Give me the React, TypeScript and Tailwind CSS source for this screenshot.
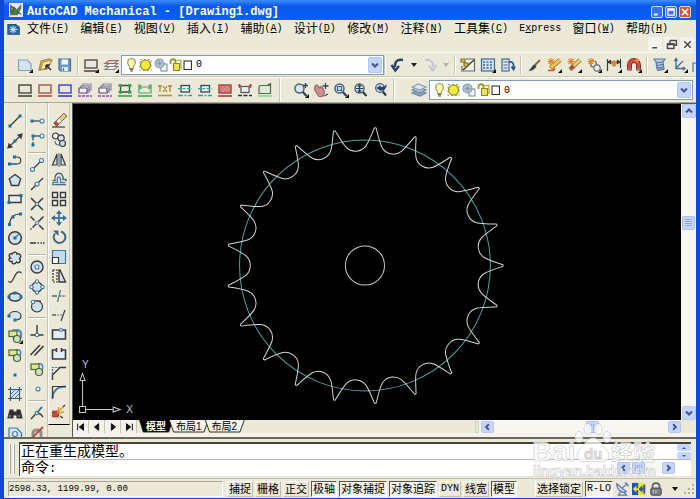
import type { ReactNode } from "react"
import clsx from "clsx"

const INK = "#3a3a3a"
const BLUE = "#3d7ba6"
const PALE = "#cfe0ee"

type Tool = {
  label: string
  art: ReactNode
  more?: boolean
}

type IconProps = {
  children: ReactNode
  className?: string
}

const Icon = ({ children, className = "size-4" }: IconProps) => (
  <svg
    viewBox="0 0 16 16"
    className={clsx("block shrink-0", className)}
    fill="none"
    stroke={INK}
    strokeWidth="1.2"
    aria-hidden="true"
  >
    {children}
  </svg>
)

const Node = ({ x, y }: { x: number; y: number }) => (
  <rect x={x - 1.5} y={y - 1.5} width="3" height="3" fill="#1f6f9c" stroke="none" />
)

const Ring = ({ x, y, r = 2 }: { x: number; y: number; r?: number }) => (
  <circle cx={x} cy={y} r={r} fill="#f4faff" stroke={BLUE} strokeWidth="1.1" />
)

const More = () => <path d="M16 12v4h-4z" fill="#111" stroke="none" />

const Box = ({ line, fill = "#e9e6dc" }: { line: string; fill?: string }) => (
  <>
    <rect x="2" y="3" width="12" height="8" fill={fill} stroke={line} strokeWidth="1.4" />
    <path d="M1 14h14" stroke={line} strokeWidth="1.6" />
  </>
)

const fileTools: Tool[] = [
  { label: "New", more: true, art: <path d="M1.5 3h9l3.5 4v6.500H1.500z" fill="#d4e4f4" stroke="#7f9fbe" /> },
  {
    label: "Open",
    art: (
      <>
        <path d="M4 4l8-2 2 1-4 9-8 1z" fill="#e9cf7b" stroke="#a98b3c" />
        <path d="M3 13l3-8 9-2-4 8z" fill="#f8e7a6" stroke="#a98b3c" />
        <path d="M9 8l5 5M9 8v4M9 8h4" stroke="#333" strokeWidth="1.5" />
      </>
    ),
  },
  {
    label: "Save",
    art: (
      <>
        <path d="M2 2h11.500v12H3.500L2 12.500z" fill="#6f9cc6" stroke="#436f9b" />
        <path d="M4.500 2.500h6.500v5H4.500z" fill="#eef5fb" stroke="none" />
        <path d="M5 10h6v4H5z" fill="#dde8f2" stroke="none" />
        <path d="M6.500 11v3" stroke="#436f9b" />
      </>
    ),
  },
]

const layerTools: Tool[] = [
  { label: "Layer", more: true, art: <Box line="#5b4a4a" /> },
  {
    label: "Layers",
    more: true,
    art: (
      <>
        <path d="M2 12.500l4-3h9l-4 3zM2 9.500l4-3h9l-4 3z" fill="#eee" stroke="#8c8282" />
        <path d="M2 6.500l4-3h9l-4 3z" fill="#f3c9c9" stroke="#a06a6a" />
      </>
    ),
  },
]

const paletteTools: Tool[] = [
  {
    label: "Design Center",
    art: (
      <>
        <path d="M6 2h8.500v12H2V9" fill="#f4f1e6" stroke="#666" />
        <path d="M3 13L14 3" stroke="#333" />
        <path d="M1 2h4v3H1zM4 6h4v3H4z" fill="#d8cf46" stroke="#77712a" />
      </>
    ),
  },
  {
    label: "Properties",
    more: true,
    art: (
      <>
        <rect x="1.500" y="2" width="13" height="12" fill="#cfe0f2" stroke="#3f6a9a" />
        <path d="M3 5h10M3 8h10M3 11h10" stroke="#3f6a9a" strokeWidth="1.400" strokeDasharray="2 1.500" />
      </>
    ),
  },
  {
    label: "Tool Palettes",
    art: (
      <>
        <rect x="2" y="2" width="7" height="12" fill="#dbe8f5" stroke="#3f6a9a" />
        <path d="M3.500 5h4M3.500 8h4M3.500 11h4" stroke="#3f6a9a" />
        <path d="M9 5c4-1 5 2 4.500 6M11.500 9.500l2 3 1.500-3" stroke="#2f5687" strokeWidth="1.800" />
      </>
    ),
  },
]

const spark = <path d="M5 1v7M1.500 4.500h7M2.500 2l5 5M7.500 2l-5 5" stroke="#e2862a" strokeWidth="1.100" />

const editTools: Tool[] = [
  {
    label: "Match Properties",
    art: (
      <>
        <path d="M14 3L8 9" stroke="#8a6a4a" strokeWidth="2.200" />
        <path d="M8.500 7.500l2 2c-2 3-4.500 4.500-8 4.500 2.500-2 3-5 6-6.500z" fill="#444" stroke="none" />
      </>
    ),
  },
  {
    label: "Power Edit",
    more: true,
    art: (
      <>
        <path d="M14 3L4.500 11" stroke="#8c6a1c" strokeWidth="4.400" />
        <path d="M14 3L5 10.500" stroke="#f0c648" strokeWidth="3" />
        <path d="M2 13.500h5l2-2" stroke="#c24b2a" strokeWidth="1.600" />
        {spark}
      </>
    ),
  },
  {
    label: "Power Erase",
    more: true,
    art: (
      <>
        <path d="M14 3L4 12.500" stroke="#7c6a3a" strokeWidth="4.400" />
        <path d="M14 3L7.500 9" stroke="#f0d060" strokeWidth="3" />
        <path d="M7.500 9L4.500 12" stroke="#c9403a" strokeWidth="3" />
        {spark}
      </>
    ),
  },
  {
    label: "Power Copy",
    more: true,
    art: (
      <>
        <circle cx="7.500" cy="7" r="3" fill="#eee" stroke="#666" />
        <circle cx="11" cy="11" r="3.200" fill="#eee" stroke="#666" />
        {spark}
      </>
    ),
  },
  {
    label: "Power Dimension",
    more: true,
    art: (
      <>
        <path d="M1.500 2v12M14.500 2v9M2 5h12M2 5l2.500-1.500v3zM14 5l-2.500-1.500v3z" fill={INK} />
        <path d="M8 3v7M5 6.500h6M6 4.500l4 4M10 4.500l-4 4" stroke="#e2862a" />
      </>
    ),
  },
  {
    label: "Power Snap",
    more: true,
    art: (
      <>
        <path d="M3.500 13V8a4.500 4.500 0 019 0v5" stroke="#7d2323" strokeWidth="5" />
        <path d="M3.500 12V8a4.500 4.500 0 019 0v4" stroke="#cf4a42" strokeWidth="3.400" />
        <path d="M3.500 11.500v2.500M12.500 11.500v2.500" stroke="#888" strokeWidth="4" />
        <path d="M11 1v5M8.500 3.500h5" stroke="#f09a3a" />
      </>
    ),
  },
]

const partTools: Tool[] = [
  {
    label: "Screw Connection",
    more: true,
    art: (
      <>
        <path d="M2 2h11l-2 3 1 7H5L4 5z" fill="#b7cbe0" stroke="#5f7f9f" />
        <path d="M4 6l7-1M4.500 8.500l7-1M5 11l7-1M5 13.500l7-1" stroke="#4b6d92" />
      </>
    ),
  },
  {
    label: "UCS",
    more: true,
    art: <path d="M4 2v9.500h8M4 11l7-7M2.500 4L4 1.500 5.500 4M11 10l2 1.500-2 1.500" stroke="#3d6c9c" strokeWidth="1.300" />,
  },
]

const inner = (line: string) => (
  <>
    <rect x="4" y="3.500" width="8.500" height="6.500" fill="#eef2ee" stroke="#3d4440" strokeWidth="1.300" />
    <path d="M1 6.700h14" stroke={line} strokeWidth="1.300" strokeDasharray="3 1.500" />
    <path d="M1 13.500h14" stroke={line} strokeWidth="1.600" strokeDasharray="5 1.500 2 1.500" />
  </>
)

const copies = (
  <>
    <path d="M6 2h8v6H6z" fill="#ece9f4" stroke="#8a82a0" />
    <path d="M4 4h8v6H4z" fill="#ece9f4" stroke="#6f6a8a" />
    <path d="M2 6h8v5H2z" fill="#f4f2fa" stroke="#55506f" />
    <path d="M1 14h14" stroke="#a03fb0" strokeWidth="1.600" strokeDasharray="3 1" />
  </>
)

const lineTools: Tool[] = [
  { label: "Contour", art: <Box line="#45423e" /> },
  { label: "Contour 2", art: <Box line="#b0503c" /> },
  { label: "Contour 3", art: <Box line="#3d3dc4" /> },
  { label: "Hidden", art: copies },
  { label: "Hidden 2", art: copies },
  {
    label: "Construction",
    art: (
      <>
        <path d="M3.500 2v9.500M12.500 2v9.500M1.500 3.500h13M1.500 10h13" stroke="#2a5a35" strokeWidth="1.300" />
        <path d="M2 2h3v3H2zM11 2h3v3h-3zM2 8.500h3v3H2zM11 8.500h3v3h-3z" fill="#3aa04a" stroke="none" />
        <path d="M1 14h14" stroke="#3aa04a" strokeWidth="1.600" />
      </>
    ),
  },
  {
    label: "Dimension",
    art: (
      <>
        <path d="M2 2v9h12V2M2 5h12M4.500 3L2 5l2.500 2M11.500 3L14 5l-2.500 2" stroke="#46a85a" strokeWidth="1.200" />
        <path d="M1 14h14" stroke="#35b04a" strokeWidth="1.600" />
      </>
    ),
  },
  {
    label: "Text",
    art: (
      <>
        <path d="M1 4h4M3 4v6M6 4l4 6M10 4l-4 6M11 4h4M13 4v6" stroke="#a98a2b" strokeWidth="1.300" />
        <path d="M1 13.500h14" stroke="#b2953a" strokeWidth="1.600" />
      </>
    ),
  },
  { label: "Center Line", art: inner("#2ba3ad") },
  { label: "Center Line 2", art: inner("#2ba3ad") },
  {
    label: "Hatch",
    art: (
      <>
        <Box line="#a33d3d" fill="#e58c8c" />
        <path d="M3 10l6-6M7 10l6-6M3 7l3-3M10 10.500l3.500-3" stroke="#c05050" strokeWidth=".8" />
      </>
    ),
  },
  {
    label: "Section",
    art: (
      <>
        <rect x="4" y="4.500" width="8" height="6" fill="#eee" stroke="#555" />
        <path d="M1 3.500h3M12 3.500h3M2.500 2v4M13.500 2v4" stroke="#cc3a3a" strokeWidth="1.300" />
        <path d="M1 13.500h14" stroke="#333" strokeWidth="1.600" strokeDasharray="4 1.500" />
      </>
    ),
  },
  {
    label: "Viewport",
    art: (
      <>
        <path d="M3 3.500h10.500v8H2V5z" fill="#dfeadb" stroke="#4c6b4a" />
        <path d="M10 3.500l3.500-2v2" stroke="#4c6b4a" />
        <path d="M1 14h14" stroke="#8ad48a" strokeWidth="1.600" />
      </>
    ),
  },
]

const glass = (
  <>
    <path d="M9.500 9.500l4 4.500" stroke="#2f3d4d" strokeWidth="2.200" />
    <circle cx="6.500" cy="6.500" r="4.500" fill="#d6e4f2" stroke="#4f6175" strokeWidth="1.500" />
  </>
)

const zoomTools: Tool[] = [
  { label: "Zoom Realtime", more: true, art: <>{glass}<path d="M12.500 1v5M10 3.500h5" stroke="#33475c" strokeWidth="1.300" /></> },
  {
    label: "Pan",
    art: (
      <>
        <path d="M2 4l2-1 3 3 1-1.500 2 2 1.500 4-2 4H6L3 10 1.500 7z" fill="#c98d93" stroke="#9a646c" />
        <path d="M12.500 1v6M9.500 4h6M11 14l4-2" stroke="#33475c" strokeWidth="1.300" />
      </>
    ),
  },
  { label: "Zoom Window", more: true, art: <>{glass}<path d="M4.500 4.500h4v4h-4z" stroke="#2c5f92" /></> },
  { label: "Zoom Extents", art: <>{glass}<path d="M6.500 3v7M3 6.500h7M6.500 3l-1 1.200h2zM6.500 10l-1-1.200h2z" stroke="#22405e" strokeWidth="1.200" /></> },
  {
    label: "Zoom Previous",
    art: (
      <>
        <path d="M9 8.500l4 5" stroke="#2f3d4d" strokeWidth="2.200" />
        <circle cx="7" cy="6" r="4.300" fill="#d6e4f2" stroke="#4f6175" strokeWidth="1.300" />
        <path d="M3.500 6l4-3v2c3 0 5-1 6-3 .5 4-2 6.500-6 6.500V9z" fill="#23466e" stroke="none" />
      </>
    ),
  },
]

const blocks = (
  <>
    <circle cx="10.500" cy="6" r="3.300" fill={PALE} stroke={BLUE} />
    <rect x="2" y="3" width="8" height="5.500" fill="#dfe88e" stroke="#4d6a34" />
    <circle cx="10" cy="11" r="3.500" fill="#cfe4b4" stroke="#3f5f46" />
  </>
)

const drawTools: Tool[] = [
  { label: "Line", art: <><path d="M3 13L13 3" /><Node x={3} y={13} /><Node x={13} y={3} /></> },
  { label: "Construction Line", art: <><path d="M1 15L15 1M1 15l1-4 3 3zM15 1l-4 1 3 3z" fill={INK} /><Node x={8} y={8} /></> },
  { label: "Polyline", art: <><path d="M2 12h8c5 0 5-7 0-7H8" /><path d="M2 12h8" stroke={BLUE} strokeWidth="1.600" /><Node x={7.5} y={5} /><Node x={2.5} y={12} /></> },
  { label: "Polygon", art: <path d="M8 2.500l5.700 4.200-2.200 6.800H4.500L2.300 6.700z" fill={PALE} strokeWidth="1.400" /> },
  { label: "Rectangle", art: <><path d="M2 4.500h12v7H2z" fill="#e6eef4" strokeWidth="1.400" /><Node x={14} y={4.5} /><Node x={2} y={11.5} /></> },
  { label: "Arc", art: <><path d="M2.500 13.500C3 7 7 3 13.500 3" /><Node x={2.5} y={13.5} /><Node x={6} y={6} /><Node x={13.5} y={3} /></> },
  { label: "Circle", art: <><circle cx="8" cy="8" r="6.300" fill={PALE} strokeWidth="1.500" /><path d="M8 8l4.500-4.500" stroke={BLUE} /><Node x={8} y={8} /></> },
  { label: "Revision Cloud", art: <path d="M5 4c2-3 5-2 5 0 3-1 5 2 2.500 4.500C14.500 11 12 14 9.500 12 8 15 4.500 14 5 11.500 1.500 12 1 8.500 3.500 8 1 6 2.500 3 5 4z" fill={PALE} strokeWidth="1.400" /> },
  { label: "Spline", art: <path d="M1.500 12c2 3 4 0 5.500-3.500S11 1 14.500 4" strokeWidth="1.300" /> },
  { label: "Ellipse", art: <><ellipse cx="8" cy="8" rx="6.300" ry="4" fill={PALE} strokeWidth="1.400" /><Node x={2} y={8} /><Node x={14} y={8} /><Node x={8} y={4} /></> },
  { label: "Ellipse Arc", art: <><path d="M2 8c0-6 12-6 12 0 0 4-4 4-6 4" fill={PALE} /><Node x={2} y={8} /><Node x={8} y={12} /></> },
  { label: "Insert Block", more: true, art: <><path d="M6 1.500h6l2.500 2.500v6H6z" fill="#dfeaf4" stroke="#7893ad" />{blocks}</> },
  { label: "Make Block", art: blocks },
  { label: "Point", art: <Node x={8} y={8} /> },
  { label: "Hatch", art: <><path d="M3.500 1v14M12.500 1v14M1 3.500h14M1 12.500h14" stroke="#2e5f86" /><path d="M4 4h8v8H4z" fill={PALE} stroke="none" /><path d="M4 8l4-4M4 12l8-8M8 12l4-4" stroke="#2e5f86" strokeWidth=".8" /></> },
  { label: "Find", art: <><path d="M3 4h3v2h4V4h3l2 8h-5V9H6v3H1z" fill="#2c2c2c" /><path d="M3 9v2M12 9v2" stroke="#9ab" /></> },
  { label: "Region", art: <><path d="M2 3h8l4.500 5v6H2z" fill="#d4e4f0" stroke={BLUE} /><circle cx="8" cy="9" r="2.500" fill="#eee" stroke={BLUE} /></> },
]

// null marks a divider between groups
const snapTools: (Tool | null)[] = [
  { label: "Temporary Track", art: <><path d="M3 8h9" /><Node x={3} y={8} /><Ring x={13} y={8} /></> },
  { label: "Snap From", art: <><path d="M4 13V4" strokeDasharray="3 1.500" /><path d="M4 4h8" /><Node x={4} y={13} /><Node x={4} y={4} /><Ring x={13} y={4} /></> },
  null,
  { label: "Endpoint", art: <><path d="M3 13L13 3" /><Ring x={3.5} y={12.5} /><Ring x={12.5} y={3.5} /></> },
  { label: "Midpoint", art: <><path d="M2 14L14 2" /><Ring x={8} y={8} /></> },
  { label: "Intersection", art: <><path d="M2 2l12 12M14 2L2 14" strokeWidth="1.500" /><Ring x={8} y={8} r={1.5} /></> },
  { label: "Apparent Intersection", art: <><path d="M1.500 1.500l4 4M10 10l4.500 4.500M14.500 1.500L1.500 14.500" strokeWidth="1.500" strokeDasharray="7 1.500" /><Ring x={8} y={8} r={1.5} /></> },
  { label: "Extension", art: <path d="M1 8h6M8.500 8h1.500M11.500 8H13M14 8h1.500" strokeWidth="1.400" /> },
  null,
  { label: "Center", art: <><circle cx="8" cy="8" r="6" fill={PALE} strokeWidth="1.400" /><Ring x={8} y={8} /></> },
  { label: "Quadrant", art: <><circle cx="8" cy="8" r="5" fill={PALE} /><Ring x={8} y={2.5} r={1.7} /><Ring x={8} y={13.5} r={1.7} /><Ring x={2.5} y={8} r={1.7} /><Ring x={13.5} y={8} r={1.7} /></> },
  { label: "Tangent", art: <><path d="M3 3h9" /><circle cx="8" cy="8.500" r="5.500" fill={PALE} /><Ring x={4} y={4} r={1.7} /></> },
  null,
  { label: "Perpendicular", art: <><path d="M8 2v9M1.500 12h13" strokeWidth="1.400" /><Ring x={8} y={12} r={1.7} /></> },
  { label: "Parallel", art: <path d="M1.500 13L11 3M5.500 13.500L14.500 4" strokeWidth="1.600" /> },
  { label: "Insert", art: blocks },
  { label: "Node", art: <Ring x={9} y={8} /> },
  null,
  { label: "Nearest", art: <><path d="M2 14L13 2M8 8c2 0 4 1 6 4" strokeWidth="1.400" /><Ring x={8} y={8} r={1.7} /><path d="M8 8l5-6" stroke={BLUE} /></> },
  { label: "None", art: <><path d="M4 13V8c0-4 8-4 8 0v5" stroke="#8f8f8f" strokeWidth="3" /><path d="M2 14L14 2" stroke="#c9432f" strokeWidth="1.800" /></> },
]

const modifyTools: Tool[] = [
  { label: "Erase", art: <><path d="M14.500 1.500L4 12" stroke="#55503f" strokeWidth="4.600" /><path d="M14 2L9.500 6.500" stroke="#f0d468" strokeWidth="3.200" /><path d="M9.500 6.500l-3 3" stroke="#e9edf5" strokeWidth="3.200" /><path d="M6.500 9.500L4.500 11.500" stroke="#cf4b3d" strokeWidth="3.200" /><path d="M1 14h13" /></> },
  { label: "Copy", art: <><circle cx="4.500" cy="4" r="3" fill="#eef" /><circle cx="10" cy="6" r="3.200" fill={PALE} /><circle cx="11.500" cy="11.500" r="3" fill={PALE} /><path d="M4 9c0 3 2 4 4 4" stroke={BLUE} /></> },
  { label: "Mirror", art: <><path d="M6 2v11H1.500zM10 2v11h4.500z" fill={PALE} /><path d="M8 1v14" stroke={BLUE} /></> },
  { label: "Offset", art: <><path d="M1 13.500h14M1.500 9.500h2.500C2.500 0 13 0 12 8.500h3v2" stroke="#49647e" strokeWidth="1.400" /><path d="M2 13.500v-2h4.500C4.500 4 11 4 9.500 11.500H14" fill={PALE} stroke={BLUE} /></> },
  { label: "Array", art: <path d="M1.500 1.500h5v5h-5zM9.500 1.500h5v5h-5zM1.500 9.500h5v5h-5zM9.500 9.500h5v5h-5z" fill="#eef2f5" strokeWidth="1.400" /> },
  { label: "Move", art: <><path d="M8 3v10M3 8h10" stroke={BLUE} strokeWidth="1.800" /><path d="M8 0l3 4H5zM8 16l3-4H5zM0 8l4-3v6zM16 8l-4-3v6z" fill="#356f9d" stroke="none" /></> },
  { label: "Rotate", art: <><path d="M4 4.500A5.800 5.800 0 1010 2.500" stroke="#45647f" strokeWidth="2" /><path d="M2 1.500h5.500V7z" fill="#45647f" stroke="none" /></> },
  { label: "Scale", art: <><path d="M1.500 1.500h13v13h-13z" fill="#c4dbed" stroke={BLUE} /><path d="M1.500 8.500h6v6h-6z" fill="#fff" /></> },
  { label: "Stretch", art: <><path d="M2 2h4v12H2z" strokeDasharray="2 1" /><path d="M8 2h1l5.500 12H8z" fill={PALE} strokeWidth="1.400" /></> },
  { label: "Trim", art: <><path d="M6.500 14L9.500 2" stroke={BLUE} /><path d="M1 8h5" /><path d="M8.500 8H15" strokeDasharray="2 1" /></> },
  { label: "Extend", art: <><path d="M10 14L14 3" /><path d="M1 8h4" /><path d="M6 8h6" stroke={BLUE} strokeDasharray="2 1" /></> },
  { label: "Break at Point", art: <><path d="M1.500 4h13v9h-13z" fill="#e3edf4" strokeWidth="1.600" /><Ring x={10} y={4} r={1.5} /></> },
  { label: "Break", art: <path d="M5.500 4h-4v9h13V4h-4M5.500 2v4M10.500 2v4" fill="#e3edf4" strokeWidth="1.600" /> },
  { label: "Chamfer", art: <><path d="M1.500 15V10L9 2.500h6" strokeWidth="1.400" /><path d="M1.500 9V2.500H8" stroke={BLUE} strokeDasharray="2 1" /></> },
  { label: "Fillet", art: <><path d="M1.500 15c0-8 5-12.500 13.500-12.500" stroke={BLUE} strokeWidth="2" /><path d="M1.500 14V2.500H15" /></> },
  { label: "Explode", art: <><path d="M1.500 7h6v6h-6z" fill="#c8463a" stroke="#8a3326" strokeDasharray="2 1" /><path d="M6 9l6-6M8 9l5-1M7 8l1-5" stroke="#e0952f" strokeWidth="1.500" /><path d="M9 12l3 2M12 3l2-2" /></> },
]

const ToolButton = ({ tool }: { tool: Tool }) => (
  <button type="button" aria-label={tool.label} className="size-4 shrink-0">
    <Icon>
      {tool.art}
      {tool.more && <More />}
    </Icon>
  </button>
)

const Tools = ({ items }: { items: Tool[] }) => (
  <div className="flex shrink-0 items-center gap-1">
    {items.map((tool) => (
      <ToolButton key={tool.label} tool={tool} />
    ))}
  </div>
)

const Divider = ({ className = "mx-1" }: { className?: string }) => (
  <div className={clsx("h-[18px] w-0.5 shrink-0 border-r border-l border-r-white border-l-[#c9c5b2]", className)} />
)

const chevrons = {
  up: "M4 10l4-4 4 4",
  down: "M4 6l4 4 4-4",
  left: "M10 4L6 8l4 4",
  right: "M6 4l4 4-4 4",
}

const ScrollArrow = ({ dir, label, className = "size-[14px]" }: { dir: keyof typeof chevrons; label: string; className?: string }) => (
  <button
    type="button"
    aria-label={label}
    className={clsx("flex shrink-0 items-center justify-center rounded-xs border border-[#b4c6f2] bg-[#c6d5fb]", className)}
  >
    <svg viewBox="0 0 16 16" className="size-[14px]" fill="none" stroke="#40578c" strokeWidth="2.800" aria-hidden="true">
      <path d={chevrons[dir]} />
    </svg>
  </button>
)

const Thumb = ({ className, rows }: { className: string; rows?: boolean }) => (
  <div className={clsx("flex shrink-0 justify-center gap-px rounded-xs border border-[#a9bff2] bg-[#c6d5fb] p-0.5", rows && "flex-col", className)}>
    {[0, 1, 2, 3].map((line) => (
      <span key={line} className={clsx("self-stretch bg-[#93abe6]", rows ? "h-px" : "w-px")} />
    ))}
  </div>
)

const LayerSelect = ({ label }: { label: string }) => (
  <div className="flex h-5 min-w-0 flex-1 items-center border border-[#7f9db9] bg-white pr-px pl-1">
    <svg viewBox="0 0 66 16" className="h-4 w-[66px] shrink-0" fill="none" strokeWidth="1.100" aria-hidden="true">
      <path d="M3.500 9.500C0 5.500 2 1.500 5.500 1.500s5.500 4 2 8v2h-4z" fill="#fbf6a8" stroke="#9c9a58" />
      <path d="M4 12.500h3M4 14h3" stroke="#555" />
      <path d="M14 2.500h11v11H14z" stroke="#a3a36b" strokeDasharray="2 2" />
      <circle cx="19.500" cy="8" r="5" fill="#f4ea3c" stroke="#86892a" />
      <rect x="35" y="7" width="6" height="7" fill="#f3f6f8" stroke="#7a92a6" />
      <circle cx="33.500" cy="6.500" r="4.500" fill="#b9cad7" stroke="#7f97aa" />
      <path d="M31 4l5 5M36 4l-5 5M33.500 3v7M30 6.500h7" stroke="#7f97aa" strokeWidth=".7" />
      <path d="M44.500 7V4.500c0-3 5-3 5 0V9" stroke="#99952e" strokeWidth="1.800" />
      <path d="M47.500 6.500h6v7h-6z" fill="#eae35a" stroke="#8d8926" />
      <path d="M50.500 3.500h4.500v9" stroke="#b5b04a" strokeWidth="1.400" />
      <rect x="58" y="4" width="7.500" height="8.500" fill="#fff" stroke="#333" />
    </svg>
    <select
      aria-label={label}
      className="h-full min-w-0 flex-1 appearance-none pl-1 font-['Liberation_Mono',monospace] text-[10px] text-black"
    >
      <option>0</option>
    </select>
    <span className="pointer-events-none flex h-4 w-[14px] shrink-0 items-center justify-center rounded-xs border border-[#b4c6f2] bg-[#c6d5fb]">
      <svg viewBox="0 0 16 16" className="size-[14px]" fill="none" stroke="#40578c" strokeWidth="2.800" aria-hidden="true">
        <path d={chevrons.down} />
      </svg>
    </span>
  </div>
)

const TitleBar = () => (
  <header className="flex h-5 items-center bg-linear-to-b from-[#3b8cf8] via-[#0a58ea] via-30% to-[#0260fb] px-[5px]">
    <Icon className="size-[14px]">
      <rect width="16" height="16" fill="#e6ece4" stroke="none" />
      <path d="M1 14L6 4l3 3 5-6v5l-4 8z" fill="#4d7d4a" stroke="none" />
      <path d="M2 3l4 3-4 5zM9 10l5 3" fill="#8fae5c" stroke="#38453a" />
    </Icon>
    <h1 className="ml-1 flex-1 truncate pt-1 font-['Liberation_Mono',monospace] text-[12px] leading-4 font-bold text-white">
      AutoCAD Mechanical - [Drawing1.dwg]
    </h1>
    <div className="flex gap-0.5 pt-1">
      <button type="button" aria-label="Minimize" className="size-3 rounded-xs border border-[#d3e0fb] bg-[#3f70e8]">
        <Icon className="size-[10px]"><path d="M3 12h6" stroke="#fff" strokeWidth="3" /></Icon>
      </button>
      <button type="button" aria-label="Maximize" className="size-3 rounded-xs border border-[#d3e0fb] bg-[#3f70e8]">
        <Icon className="size-[10px]"><path d="M3 3h10v10H3zM3 5h10" stroke="#fff" strokeWidth="2" /></Icon>
      </button>
      <button type="button" aria-label="Close" className="size-3 rounded-xs border border-[#f3d4c8] bg-[#dd4f2a]">
        <Icon className="size-[10px]"><path d="M3 3l10 10M13 3L3 13" stroke="#fff" strokeWidth="2.800" /></Icon>
      </button>
    </div>
  </header>
)

const menus = [
  { name: "文件", hotkey: "F" },
  { name: "编辑", hotkey: "E" },
  { name: "视图", hotkey: "V" },
  { name: "插入", hotkey: "I" },
  { name: "辅助", hotkey: "A" },
  { name: "设计", hotkey: "D" },
  { name: "修改", hotkey: "M" },
  { name: "注释", hotkey: "N" },
  { name: "工具集", hotkey: "C" },
  { name: "Express", hotkey: "" },
  { name: "窗口", hotkey: "W" },
  { name: "帮助", hotkey: "H" },
]

const MenuBar = () => (
  <div className="border-b border-[#fbfaf5] pb-px">
    <nav className="flex h-[17px] items-center pr-[28px] pl-[3px]">
      <Icon className="size-[14px]">
        <path d="M1 3h9l4 3v8H1z" fill="#2d6b9c" stroke="#1f4e78" />
        <path d="M7 4v9M3 8.500h9M4 5.500l6 6M10 5.500l-6 6" stroke="#bfe0f2" />
      </Icon>
      <div className="ml-1.5 flex flex-1 justify-between">
        {menus.map(({ name, hotkey }) => (
          <button key={name} type="button" className="flex items-center text-[12px] leading-4 whitespace-nowrap">
            {hotkey ? (
              <>
                {name}
                <span className="font-['Liberation_Mono',monospace] text-[10px]">
                  (<span className="underline">{hotkey}</span>)
                </span>
              </>
            ) : (
              <span className="font-['Liberation_Mono',monospace] text-[10px]">
                E<span className="underline">x</span>press
              </span>
            )}
          </button>
        ))}
      </div>
    </nav>
    <div className="flex h-[14px] justify-end gap-0.5 pr-0.5">
      {[
        ["Minimize drawing", "M4 12h6"],
        ["Restore drawing", "M6 3h8v6h-3M6 3v3M3 7h8v6H3zM3 8h8"],
        ["Close drawing", "M4 4l8 8M12 4l-8 8"],
      ].map(([label, d]) => (
        <button key={label} type="button" aria-label={label} className="flex size-[14px] items-center justify-center bg-[#f4f2ea]">
          <Icon className="size-[13px]"><path d={d} stroke="#4a4a4a" strokeWidth="1.800" /></Icon>
        </button>
      ))}
    </div>
  </div>
)

const Caret = ({ color, label }: { color: string; label: string }) => (
  <button type="button" aria-label={label} className="flex w-2 shrink-0 justify-center">
    <svg viewBox="0 0 6 4" className="h-1 w-1.5" aria-hidden="true">
      <path d="M0 0h6L3 4z" fill={color} />
    </svg>
  </button>
)

const StandardToolbar = () => (
  <div className="flex h-6 items-center overflow-hidden border-b border-[#c9c5b2] pl-[13px]">
    <Tools items={fileTools} />
    <Divider />
    <Tools items={layerTools} />
    <div className="ml-0.5 flex min-w-0 flex-1">
      <LayerSelect label="Mechanical layer" />
    </div>
    <Divider className="mr-1" />
    <div className="flex shrink-0 items-center gap-1">
      <button type="button" aria-label="Undo" className="size-4">
        <Icon><path d="M13 3C7 2 4.500 5 5 10M1.500 8l3.800 5.500L9 9" stroke="#283f6c" strokeWidth="2.400" /></Icon>
      </button>
      <Caret color="#222" label="Undo list" />
      <button type="button" aria-label="Redo" className="size-4" disabled>
        <Icon><path d="M3 3c6-1 8.500 2 8 7M14.500 8l-3.800 5.500L7 9" stroke="#c5c8cc" strokeWidth="2.200" /></Icon>
      </button>
      <Caret color="#b4b2aa" label="Redo list" />
    </div>
    <Divider />
    <Tools items={paletteTools} />
    <Divider />
    <Tools items={editTools} />
    <Divider />
    <Tools items={partTools} />
    <div className="ml-1 h-4 w-1 shrink-0 overflow-hidden">
      <Icon><path d="M1 15V6h4" stroke={BLUE} /></Icon>
    </div>
  </div>
)

const LayerToolbar = () => (
  <div className="flex h-[26px] border-t border-b border-t-white border-b-[#aca899]">
    <div className="flex items-center border-r border-[#c9c5b2] pr-1.5 pl-[13px]">
      <Tools items={lineTools} />
    </div>
    <div className="flex items-center border-r border-l border-r-[#c9c5b2] border-l-white pr-1 pl-3">
      <Tools items={zoomTools} />
    </div>
    <div className="flex min-w-0 flex-1 items-center gap-0.5 border-l border-white pr-[3px] pl-4">
      <ToolButton
        tool={{
          label: "Layer Manager",
          art: (
            <>
              <path d="M1 11l6-3 8 3-6 3z" fill="#8fa6bd" stroke="#6f8aa5" />
              <path d="M1 8l6-3 8 3-6 3z" fill="#b3c6d8" stroke="#6f8aa5" />
              <path d="M1 5l6-3 8 3-6 3z" fill="#dbe6ef" stroke="#8aa1b7" />
            </>
          ),
        }}
      />
      <LayerSelect label="Layer" />
    </div>
  </div>
)

const ToolColumn = ({ items, className = "-mb-1" }: { items: (Tool | null)[]; className?: string }) => (
  <div className={clsx("flex w-[22px] shrink-0 flex-col items-center justify-between border-r border-l border-r-[#c9c5b2] border-l-white pt-[10px]", className)}>
    {items.map((tool, i) =>
      tool ? (
        <ToolButton key={i} tool={tool} />
      ) : (
        <div key={i} className="h-0.5 w-[18px] shrink-0 border-t border-b border-t-[#b8b4a2] border-b-white" />
      )
    )}
  </div>
)

const TEETH = 21
const TIP = { u: 136, v: 19.6 }
const ROOT = 114.3

// One tooth gap in its own frame (u along the axis, v across), swept round the hub
const sprocket = (cx: number, cy: number) => {
  const at = (turn: number, u: number, v: number) => {
    const x = cx + u * Math.cos(turn) - v * Math.sin(turn)
    const y = cy + u * Math.sin(turn) + v * Math.cos(turn)
    return `${x.toFixed(1)} ${y.toFixed(1)}`
  }
  const step = (2 * Math.PI) / TEETH
  let d = ""
  for (let i = 0; i < TEETH; i++) {
    const turn = (i + 0.5) * step
    const next = turn + step / 2
    d += `${i ? "L" : "M"}${at(turn, TIP.u, -TIP.v)}`
    d += `C${at(turn, 120, -11.5)} ${at(turn, ROOT, -9)} ${at(turn, ROOT, 0)}`
    d += `C${at(turn, ROOT, 9)} ${at(turn, 120, 11.5)} ${at(turn, TIP.u, TIP.v)}`
    d += `Q${at(next, 138, 0)} ${at(turn + step, TIP.u, -TIP.v)}`
  }
  return d + "Z"
}

const Drawing = () => (
  <svg viewBox="0 0 606 315" className="block min-h-0 w-full flex-1 bg-black" fill="none" role="img" aria-label="Sprocket">
    <circle cx="291" cy="161" r="125" stroke="#4fa3a3" />
    <path d={sprocket(291, 161)} stroke="#d4d4d4" />
    <circle cx="291" cy="161" r="19.500" stroke="#c4c4c4" />
    <g stroke="#c8c8c8">
      <path d="M6.500 301.500h6v6h-6zM9.500 301v-26M13 304.500h27" />
      <path d="M9.500 268.500l-2.500 7h5zM47 304.500l-7-2.500v5z" />
    </g>
    <g fill="#c8c8c8" className="font-['Liberation_Sans',sans-serif] text-[10px]">
      <text x="9" y="263">Y</text>
      <text x="53" y="308">X</text>
    </g>
  </svg>
)

const tabNav = [
  ["First tab", "M2 2v8M9 2v8L4 6z"],
  ["Previous tab", "M8 2v8L3 6z"],
  ["Next tab", "M4 2v8l5-4z"],
  ["Last tab", "M10 2v8M3 2v8l5-4z"],
]

const layouts = ["模型", "布局1", "布局2"]

const LayoutTabs = () => (
  <div className="flex h-[13px] items-stretch bg-[#ece9d8]">
    {tabNav.map(([label, d]) => (
      <button key={label} type="button" aria-label={label} className="flex w-4 items-center justify-center border-r border-[#c9c5b2] bg-[#f4f2ea]">
        <svg viewBox="0 0 12 12" className="size-[10px]" fill="#111" stroke="#111" strokeWidth="1.200" aria-hidden="true">
          <path d={d} />
        </svg>
      </button>
    ))}
    <div className="flex pl-1" role="tablist">
      {layouts.map((name, i) => (
        <button
          key={name}
          type="button"
          role="tab"
          aria-selected={i === 0}
          className={clsx("relative isolate px-[5px] text-[10px] leading-[12px] whitespace-nowrap", i === 0 ? "font-bold text-white" : "text-black")}
        >
          <svg viewBox="0 0 40 13" preserveAspectRatio="none" className="absolute inset-0 -z-10 h-full w-full overflow-visible" aria-hidden="true">
            <path d="M-2 0l5 12h34l5-12" fill={i === 0 ? "#000" : "#f6f4ee"} stroke="#222" />
          </svg>
          {name}
        </button>
      ))}
    </div>
    <div className="flex-1" />
    <div className="flex w-[206px] shrink-0 items-center bg-[#f7f6f1]">
      <div className="mr-0.5 h-3 w-1 border border-[#d0ccbb] bg-[#ece9d8]" />
      <ScrollArrow dir="left" label="Scroll left" className="h-3 w-[13px]" />
      <div className="flex-[92]" />
      <Thumb className="h-3 w-[13px]" />
      <div className="flex-[69]" />
      <ScrollArrow dir="right" label="Scroll right" className="h-3 w-[13px]" />
    </div>
  </div>
)

const Workspace = () => (
  <div className="flex flex-1 overflow-hidden">
    <ToolColumn items={drawTools} />
    <ToolColumn items={snapTools} />
    <ToolColumn items={modifyTools} className="mb-3 border-b pb-1" />
    <div className="ml-0.5 flex min-w-0 flex-1 flex-col border-t border-l border-[#5a584f]">
      <div className="flex min-h-0 flex-1">
        <div className="flex min-w-0 flex-1 flex-col">
          <Drawing />
        </div>
        <div className="flex w-[15px] shrink-0 flex-col items-center bg-[#f7f6f1]">
          <ScrollArrow dir="up" label="Scroll up" />
          <div className="flex-[97]" />
          <Thumb className="h-[14px] w-[13px]" rows />
          <div className="flex-[175]" />
          <ScrollArrow dir="down" label="Scroll down" />
        </div>
      </div>
      <div className="pr-[15px]">
        <LayoutTabs />
      </div>
      <div className="h-1 bg-[#f4f2ea]" />
    </div>
  </div>
)

const CommandPanel = () => (
  <section className="flex border-t-2 border-[#6b6860] bg-[#ece9d8] pt-[3px] pr-[5px] pb-0.5 pl-[5px]">
    <div className="mr-1 flex gap-0.5 py-0.5">
      <span className="w-0.5 border-r border-[#aca899] bg-white" />
      <span className="w-0.5 border-r border-[#aca899] bg-white" />
    </div>
    <div className="min-w-0 flex-1 border-t-2 border-l border-[#45433d] bg-white text-[14px] text-black">
      <div className="flex h-4 justify-between border-b border-[#b9b7ae]">
        <p className="pl-px leading-[14px]">正在重生成模型。</p>
        <div className="flex w-[14px] flex-col gap-px">
          {(["up", "down"] as const).map((dir) => (
            <button key={dir} type="button" aria-label={`History ${dir}`} className="flex flex-1 items-center justify-center rounded-xs bg-[#c6d5fb]">
              <svg viewBox="0 0 4 2" className={clsx("h-0.5 w-1", dir === "down" && "rotate-180")} aria-hidden="true">
                <path d="M0 2h4L2 0z" fill="#40578c" />
              </svg>
            </button>
          ))}
        </div>
      </div>
      <div className="flex h-4 items-center">
        <label htmlFor="command" className="pl-px leading-4">
          命令<span className="font-['Liberation_Mono',monospace] text-[12px]">:</span>
        </label>
        <input id="command" className="min-w-0 flex-1 outline-none" autoComplete="off" />
        <div className="mr-4 flex h-3 w-[58px] items-center bg-[#f7f6f1]">
          <ScrollArrow dir="left" label="Command scroll left" className="h-3 w-[13px]" />
          <Thumb className="ml-0.5 h-3 w-[13px]" />
          <div className="flex-1" />
          <ScrollArrow dir="right" label="Command scroll right" className="h-3 w-[13px]" />
        </div>
      </div>
    </div>
  </section>
)

const modes = [
  { name: "捕捉", on: false },
  { name: "栅格", on: false },
  { name: "正交", on: false },
  { name: "极轴", on: true },
  { name: "对象捕捉", on: true },
  { name: "对象追踪", on: true },
  { name: "DYN", on: false },
  { name: "线宽", on: false },
  { name: "模型", on: true },
]

const StatusToggle = ({ name, on }: { name: string; on: boolean }) => (
  <button
    type="button"
    aria-pressed={on}
    className={clsx(
      "block h-4 shrink-0 border px-px text-[11px] leading-[14px] whitespace-nowrap text-black",
      on ? "border-t-[#55534b] border-r-white border-b-white border-l-[#55534b] bg-[#f4f2ea]" : "border-t-white border-r-[#c3bfae] border-b-[#c3bfae] border-l-white"
    )}
  >
    {/^[A-Z-]+$/.test(name) ? <span className="block font-['Liberation_Mono',monospace] text-[10px]">{name}</span> : name}
  </button>
)

const StatusBar = () => (
  <footer className="flex h-5 items-center border-t border-[#c3bfae] pl-1">
    <output className="h-4 min-w-0 flex-1 truncate border border-t-[#aca899] border-r-white border-b-white border-l-[#aca899] font-['Liberation_Mono',monospace] text-[9px] leading-[15px] text-black">
      2598.33, 1199.99, 0.00
    </output>
    <div className="ml-1 flex items-center gap-0.5">
      {modes.map((mode) => (
        <StatusToggle key={mode.name} {...mode} />
      ))}
    </div>
    <div className="ml-[18px] flex items-center gap-0.5">
      <StatusToggle name="选择锁定" on={false} />
      <StatusToggle name="R-LO" on />
    </div>
    <div className="ml-0.5 flex items-center gap-[3px]">
      <button type="button" aria-label="Communication Center">
        <Icon className="size-[14px]">
          <path d="M2 2l11 9c-5 3-11-2-11-9z" fill="#c9d6ee" stroke="#4e6aa6" />
          <path d="M7 10l-3 5h9l-3-4M8 7l6-5M11 1c2 0 4 2 4 4" stroke="#5874b0" strokeWidth="1.400" />
        </Icon>
      </button>
      <button type="button" aria-label="Standards">
        <Icon className="size-[14px]">
          <rect y="1" width="8" height="14" fill="#2857a8" stroke="none" />
          <rect x="7" y="1" width="9" height="14" fill="#f0e032" stroke="none" />
          <path d="M7 8l5-4v3h1V3h2v10h-2V9h-1v3z" fill="#2857a8" stroke="none" />
          <path d="M1 8l4-4v3h3v2H5v3z" fill="#f0e032" stroke="none" />
        </Icon>
      </button>
      <button type="button" aria-label="Toolbar lock">
        <Icon className="size-[14px]">
          <path d="M4 8V5c0-5 8-5 8 0v3" stroke="#5d6268" strokeWidth="2" />
          <rect x="2" y="7" width="12" height="8" rx="2" fill="#7a8088" stroke="#4d5258" />
          <path d="M5 9v4M8 9v4" stroke="#c3c9d0" />
        </Icon>
      </button>
    </div>
    <div className="ml-2 flex items-center gap-1">
      <Caret color="#111" label="Status bar menu" />
      <svg viewBox="0 0 12 12" className="mr-px size-3" fill="#b3ae9b" aria-hidden="true">
        <path d="M9 1h2v2H9zM9 5h2v2H9zM9 9h2v2H9zM5 5h2v2H5zM5 9h2v2H5zM1 9h2v2H1z" />
      </svg>
    </div>
  </footer>
)

const Watermark = () => (
  <svg
    viewBox="0 0 130 62"
    className="pointer-events-none absolute right-[36px] bottom-[14px] h-[62px] w-[130px] font-['Liberation_Sans','Noto_Sans_CJK_SC',sans-serif] font-bold"
    fill="#fff"
    fillOpacity=".75"
    stroke="#bdbdbd"
    strokeWidth=".7"
    strokeOpacity=".8"
  >
    <text x="2" y="39" fontSize="28">Bai</text>
    <ellipse cx="49" cy="15" rx="4" ry="5.500" />
    <ellipse cx="58" cy="7" rx="4" ry="5.500" />
    <ellipse cx="68" cy="7" rx="4" ry="5.500" />
    <ellipse cx="77" cy="15" rx="4" ry="5.500" />
    <path d="M63 16c7 0 8 7 13 11 6 6 2 14-5 13-5-1-11-1-16 0-7 1-11-7-5-13 5-4 6-11 13-11z" />
    <text x="54" y="37" fontSize="15" fill="#ddd">du</text>
    <text x="81" y="38" fontSize="22">经验</text>
    <text x="3" y="54" fontSize="14">jingyan.baidu.com</text>
  </svg>
)

const App = () => (
  <div className="relative flex min-h-screen flex-col border-r-4 border-b-4 border-l-4 border-[#0f47d6] bg-[#ece9d8] font-['Liberation_Sans','Noto_Sans_CJK_SC',sans-serif] text-black">
    <TitleBar />
    <MenuBar />
    <StandardToolbar />
    <LayerToolbar />
    <Workspace />
    <CommandPanel />
    <StatusBar />
    <Watermark />
  </div>
)

export default App
